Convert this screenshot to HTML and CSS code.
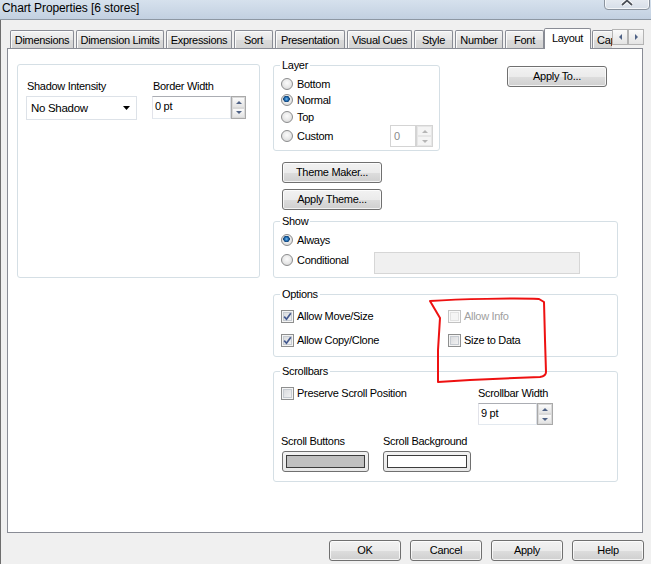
FILE: index.html
```html
<!DOCTYPE html>
<html>
<head>
<meta charset="utf-8">
<title>Chart Properties</title>
<link rel="stylesheet" href="styles.css">
</head>
<body>
<div class="titlebar">
  <span class="title">Chart Properties [6 stores]</span>
  <div class="close"><svg width="12" height="11" viewBox="0 0 12 11"><path d="M1 1L11 10M11 1L1 10" stroke="#ffffff" stroke-width="3.5"/><path d="M1 1L11 10M11 1L1 10" stroke="#4a4f57" stroke-width="1.8"/></svg></div>
</div>
<div class="client">
  <div class="tabstrip">
    <div class="tab-list">
      <div class="tab w-dim">Dimensions</div>
      <div class="tab w-dl">Dimension Limits</div>
      <div class="tab w-exp">Expressions</div>
      <div class="tab w-sort">Sort</div>
      <div class="tab w-pres">Presentation</div>
      <div class="tab w-vc">Visual Cues</div>
      <div class="tab w-style">Style</div>
      <div class="tab w-num">Number</div>
      <div class="tab w-font">Font</div>
      <div class="tab active w-lay">Layout</div>
      <div class="tab w-cap">Caption</div>
    </div>
    <div class="tab-arrows">
      <div class="tab-arrow"><span class="tri-left"></span></div>
      <div class="tab-arrow"><span class="tri-right"></span></div>
    </div>
  </div>

  <div class="panel">
    <div class="group-plain">
      <div class="field-col first">
        <div class="label">Shadow Intensity</div>
        <div class="dropdown"><span>No Shadow</span><svg width="7" height="4" viewBox="0 0 7 4"><path d="M0 0H7L3.5 4Z" fill="#000"/></svg></div>
      </div>
      <div class="field-col">
        <div class="label">Border Width</div>
        <div class="spin">
          <div class="spin-field bw-field">0 pt</div>
          <div class="spin-btns"><div class="spin-up"><span class="tri-up"></span></div><div class="spin-down"><span class="tri-down"></span></div></div>
        </div>
      </div>
    </div>

    <div class="col-right">
      <div class="top-row">
        <fieldset class="group layer">
          <legend>Layer</legend>
          <div class="row h16"><span class="rb"></span>Bottom</div>
          <div class="row h16"><span class="rb on"></span>Normal</div>
          <div class="row h17"><span class="rb"></span>Top</div>
          <div class="row h22 between">
            <div class="row"><span class="rb"></span>Custom</div>
            <div class="spin custom-spin">
              <div class="spin-field custom-field">0</div>
              <div class="spin-btns custom-btns disabled"><div class="spin-up"><span class="tri-up"></span></div><div class="spin-down"><span class="tri-down"></span></div></div>
            </div>
          </div>
        </fieldset>
        <button class="btn apply-to">Apply To...</button>
      </div>

      <button class="btn theme-maker">Theme Maker...</button>
      <button class="btn apply-theme">Apply Theme...</button>

      <fieldset class="group show">
        <legend>Show</legend>
        <div class="row h16"><span class="rb on"></span>Always</div>
        <div class="cond-row">
          <div class="row cond-label"><span class="rb"></span>Conditional</div>
          <div class="cond-box"></div>
        </div>
      </fieldset>

      <fieldset class="group options">
        <legend>Options</legend>
        <div class="opt-grid">
          <div class="row h16"><span class="cb"><svg width="9" height="9" viewBox="0 0 9 9"><path d="M1.2 4.6L3.5 7.2L7.8 1.2" fill="none" stroke="#44598f" stroke-width="1.7"/></svg></span>Allow Move/Size</div>
          <div class="row h16 disabled-text"><span class="cb off"></span>Allow Info</div>
          <div class="row h16"><span class="cb"><svg width="9" height="9" viewBox="0 0 9 9"><path d="M1.2 4.6L3.5 7.2L7.8 1.2" fill="none" stroke="#44598f" stroke-width="1.7"/></svg></span>Allow Copy/Clone</div>
          <div class="row h16"><span class="cb"></span>Size to Data</div>
        </div>
      </fieldset>

      <fieldset class="group scrollbars">
        <legend>Scrollbars</legend>
        <div class="sb-top">
          <div class="sb-left"><div class="row h16"><span class="cb"></span>Preserve Scroll Position</div></div>
          <div class="sb-right">
            <div class="label16">Scrollbar Width</div>
            <div class="spin sbw">
              <div class="spin-field sbw-field">9 pt</div>
              <div class="spin-btns sbw-btns"><div class="spin-up"><span class="tri-up"></span></div><div class="spin-down"><span class="tri-down"></span></div></div>
            </div>
          </div>
        </div>
        <div class="sb-bottom">
          <div class="sb-col1">
            <div class="label">Scroll Buttons</div>
            <div class="color-btn w87"><div class="swatch gray"></div></div>
          </div>
          <div class="sb-col2">
            <div class="label">Scroll Background</div>
            <div class="color-btn w88"><div class="swatch white"></div></div>
          </div>
        </div>
      </fieldset>
    </div>
  </div>

  <div class="footer">
    <button class="btn foot">OK</button>
    <button class="btn foot">Cancel</button>
    <button class="btn foot">Apply</button>
    <button class="btn foot">Help</button>
  </div>
</div>

<svg class="annotation" width="651" height="564" viewBox="0 0 651 564">
  <path d="M440 318 L430 301 C 460 299 515 298 539 299 L544 302 L545 340 L546 372 Q 546 376 540 377 L470 380 L438 382 L438 350 L440 318" fill="none" stroke="#ee1111" stroke-width="2" stroke-linejoin="round" stroke-linecap="round"/>
</svg>
</body>
</html>
```

FILE: styles.css
```css
* { box-sizing: border-box; }
html, body { margin: 0; padding: 0; }
body {
  width: 651px;
  height: 564px;
  overflow: hidden;
  position: relative;
  background: #f0f0f0;
  font: 11px/14px "Liberation Sans", Arial, sans-serif;
  letter-spacing: -0.3px;
  color: #000;
}

/* title bar */
.titlebar {
  height: 20px;
  display: flex;
  justify-content: space-between;
  align-items: flex-start;
  background: linear-gradient(#d6e1ed, #c2d0e1);
  border-bottom: 1px solid #8d97a3;
  overflow: hidden;
}
.title {
  font-size: 12px;
  letter-spacing: -0.1px;
  line-height: 14px;
  padding: 1px 0 0 2px;
}
.close {
  width: 46px;
  height: 20px;
  margin-top: -10px;
  margin-right: 1px;
  border: 1px solid #8a939e;
  border-radius: 0 0 4px 4px;
  background: linear-gradient(#f3f5f8, #d6dee8);
  box-shadow: inset 0 0 0 1px rgba(255,255,255,0.7);
  display: flex;
  align-items: center;
  justify-content: center;
}

/* client */
.client {
  height: 544px;
  border-left: 1px solid #6e6e6e;
  padding-top: 8px;
}

/* tabs */
.tabstrip { display: flex; margin-left: 9px; height: 20px; }
.tab-list {
  display: flex;
  align-items: flex-end;
  width: 602px;
  height: 21px;
  overflow: hidden;
  position: relative;
  z-index: 1;
  flex: none;
}
.tab {
  flex: none;
  height: 18px;
  margin: 0 2px 1px 0;
  border: 1px solid #898c95;
  border-bottom: none;
  border-radius: 2px 2px 0 0;
  background: linear-gradient(#f3f3f3, #e6e6e6 50%, #dadada 51%, #d3d3d3);
  box-shadow: inset 1px 1px 0 #fbfbfb;
  padding-top: 2px;
  text-align: center;
  white-space: nowrap;
  overflow: hidden;
}
.tab.active {
  height: 21px;
  margin-bottom: 0;
  background: #fff;
  box-shadow: none;
}
.w-dim { width: 64px; }
.w-dl { width: 88px; }
.w-exp { width: 66px; }
.w-sort { width: 39px; }
.w-pres { width: 70px; }
.w-vc { width: 65px; }
.w-style { width: 39px; }
.w-num { width: 48px; }
.w-font { width: 39px; margin-right: 0; }
.w-lay { width: 47px; margin-right: 1px; }
.w-cap { width: 50px; text-align: left; padding-left: 4px; }

.tab-arrows { display: flex; margin-top: 1px; height: 16px; flex: none; }
.tab-arrow {
  width: 16px;
  height: 16px;
  border: 1px solid #b4b4b4;
  background: linear-gradient(#fafafa, #e4e4e4);
  display: flex;
  align-items: center;
  justify-content: center;
}
.tri-left { border-top: 3px solid transparent; border-bottom: 3px solid transparent; border-right: 3px solid #4f6286; }
.tri-right { border-top: 3px solid transparent; border-bottom: 3px solid transparent; border-left: 3px solid #4f6286; }

/* panel */
.panel {
  margin-left: 6px;
  width: 636px;
  height: 485px;
  border: 1px solid #898c95;
  background: #fff;
  display: flex;
  align-items: flex-start;
  padding: 10px 0 0 9px;
  gap: 13px;
}

.label { line-height: 14px; padding-left: 1px; white-space: nowrap; }
.label16 { line-height: 16px; white-space: nowrap; }

.group-plain {
  width: 243px;
  height: 214px;
  margin-top: 5px;
  border: 1px solid #d5dfe5;
  border-radius: 3px;
  padding: 14px 0 0 8px;
  display: flex;
  flex: none;
}
.field-col { flex: none; }
.field-col.first { width: 126px; }
.dropdown {
  margin-top: 3px;
  width: 111px;
  height: 24px;
  border: 1px solid #dde2e8;
  display: flex;
  align-items: center;
  justify-content: space-between;
  padding: 0 6px 0 4px;
  font-size: 11.5px;
}

/* spin box */
.spin { display: flex; margin-top: 3px; }
.spin-field {
  height: 23px;
  border: 1px solid;
  border-color: #abadb3 #dbdfe6 #e3e9ef #e2e3ea;
  padding: 2px 0 0 2px;
  background: #fff;
}
.bw-field { width: 79px; }
.spin-btns {
  width: 15px;
  height: 23px;
  display: flex;
  flex-direction: column;
  border: 1px solid #a9a9a9;
  background: #f0f0f0;
}
.spin-up, .spin-down {
  flex: 1;
  display: flex;
  align-items: center;
  justify-content: center;
  background: linear-gradient(#fbfbfb, #e3e3e3);
  border: 1px solid #d9d9d9;
}
.tri-up { border-left: 3px solid transparent; border-right: 3px solid transparent; border-bottom: 3px solid #4f6286; }
.tri-down { border-left: 3px solid transparent; border-right: 3px solid transparent; border-top: 3px solid #4f6286; }
.disabled .tri-up { border-bottom-color: #b5b5b5; }
.disabled .tri-down { border-top-color: #b5b5b5; }

.custom-spin { margin-top: 0; }
.custom-field { width: 26px; height: 22px; padding: 3px 0 0 3px; color: #8a8a8a; border-color: #d4d4d4; }
.custom-btns { width: 17px; height: 22px; border-color: #d4d4d4; }
.spin-btns.disabled .spin-up, .spin-btns.disabled .spin-down { background: #f4f4f4; border-color: #e6e6e6; }

.sbw { margin-top: 2px; }
.sbw-field { width: 59px; height: 22px; }
.sbw-btns { width: 16px; height: 22px; }

/* right column */
.col-right {
  width: 345px;
  display: flex;
  flex-direction: column;
  align-items: flex-start;
  flex: none;
}
.top-row { display: flex; align-items: flex-start; }

.group {
  margin: 0;
  min-width: 0;
  border: 1px solid #d5dfe5;
  border-radius: 3px;
  padding: 4px 7px 3px 7px;
}
.group legend {
  padding: 0 2px;
  margin-left: -1px;
  line-height: 13px;
}
.group.layer { width: 167px; padding-right: 6px; }
.group.show { width: 345px; margin-top: 5px; }
.group.options { width: 345px; margin-top: 10px; padding: 7px 7px 8px; }
.group.scrollbars { width: 345px; margin-top: 8px; padding: 7px 7px 9px; }

.row { display: flex; align-items: center; white-space: nowrap; }
.h16 { height: 16px; }
.h17 { height: 17px; }
.h22 { height: 22px; }
.between { justify-content: space-between; }

/* radio */
.rb {
  width: 12px;
  height: 12px;
  margin-right: 4px;
  border-radius: 50%;
  border: 1px solid #8b8c8d;
  background: radial-gradient(circle at 50% 40%, #fbfbfb 0, #e9e9e9 50%, #cfcfcf 100%);
  flex: none;
}
.rb.on {
  background:
    radial-gradient(circle at 45% 40%, #7fc0f0 0, #2a79c0 1.5px, #0d3f73 3px, rgba(0,0,0,0) 3.5px),
    radial-gradient(circle at 50% 40%, #fbfbfb 0, #e9e9e9 50%, #cfcfcf 100%);
}

/* checkbox */
.cb {
  width: 13px;
  height: 13px;
  margin-right: 3px;
  border: 1px solid #8e8f8f;
  background: linear-gradient(135deg, #d4d6d9, #f7f7f7);
  box-shadow: inset 0 0 0 1px #f4f4f4, inset 0 0 0 2px #c6cbd1;
  flex: none;
  display: flex;
  align-items: center;
  justify-content: center;
}
.cb.off {
  border-color: #c2c2c2;
  background: #f5f5f5;
  box-shadow: inset 0 0 0 1px #fafafa, inset 0 0 0 2px #e2e2e2;
}
.disabled-text { color: #a0a0a0; }

.opt-grid {
  display: grid;
  grid-template-columns: 167px 1fr;
  row-gap: 8px;
}

.cond-row { display: flex; align-items: flex-start; height: 26px; }
.cond-label { width: 93px; height: 14px; margin-top: 5px; }
.cond-box {
  width: 206px;
  height: 22px;
  margin-top: 4px;
  background: #f0f0f0;
  border: 1px solid #d6d6d6;
}

.sb-top { display: flex; }
.sb-left { width: 197px; }
.sb-bottom { display: flex; margin-top: 9px; }
.sb-col1 { width: 102px; }
.sb-col1 .label, .sb-col2 .label { padding-left: 0; }
.color-btn {
  margin-top: 3px;
  height: 21px;
  border: 1px solid #707070;
  border-radius: 3px;
  padding: 3px;
  background: linear-gradient(#f2f2f2, #e8e8e8);
}
.sb-col1 .color-btn { margin-left: 1px; }
.w87 { width: 87px; }
.w88 { width: 88px; }
.swatch { height: 100%; border: 1px solid #3c3c3c; }
.swatch.gray { background: #c0c0c0; }
.swatch.white { background: #fff; }

/* buttons */
.btn {
  height: 21px;
  width: 100px;
  padding: 0;
  border: 1px solid #707070;
  border-radius: 3px;
  background: linear-gradient(#f2f2f2 0%, #ebebeb 50%, #dddddd 51%, #cfcfcf 100%);
  box-shadow: inset 0 0 0 1px rgba(255,255,255,0.75);
  font: inherit;
  letter-spacing: inherit;
  color: #000;
  line-height: 19px;
  text-align: center;
  flex: none;
}
.btn.apply-to { margin: 7px 0 0 67px; }
.btn.theme-maker { margin: 11px 0 0 9px; }
.btn.apply-theme { margin: 6px 0 0 9px; }

.footer {
  display: flex;
  justify-content: flex-end;
  gap: 9px;
  padding: 7px 7px 0 0;
}
.btn.foot { width: 72px; }

.annotation {
  position: absolute;
  left: 0;
  top: 0;
  pointer-events: none;
}
```
